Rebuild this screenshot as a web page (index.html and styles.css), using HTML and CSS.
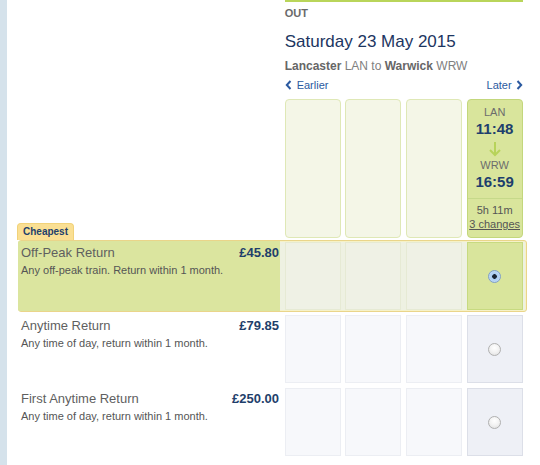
FILE: index.html
```html
<!DOCTYPE html>
<html>
<head>
<meta charset="utf-8">
<link rel="stylesheet" href="styles.css">
</head>
<body>
<div class="page">
  <aside class="strip"></aside>
  <main class="main">
    <header class="head">
      <div class="bar"></div>
      <div class="out">OUT</div>
      <h1 class="date">Saturday 23 May 2015</h1>
      <div class="route"><b>Lancaster</b> LAN to <b>Warwick</b> WRW</div>
      <nav class="nav">
        <a class="earlier"><svg width="7" height="10" viewBox="0 0 7 10"><path d="M5.5 1 L1.8 5 L5.5 9" fill="none" stroke="#2b5aa0" stroke-width="2"/></svg>Earlier</a>
        <a class="later">Later<svg width="7" height="10" viewBox="0 0 7 10"><path d="M1.5 1 L5.2 5 L1.5 9" fill="none" stroke="#2b5aa0" stroke-width="2"/></svg></a>
      </nav>
    </header>

    <div class="grid times">
      <div class="label"></div>
      <div class="tcard"></div>
      <div class="tcard"></div>
      <div class="tcard"></div>
      <div class="tcard sel">
        <div class="tmain">
          <div class="stn">LAN</div>
          <div class="time">11:48</div>
          <svg class="arrow" width="12" height="15" viewBox="0 0 12 15"><path d="M6 0 V13 M1 8 L6 13 L11 8" fill="none" stroke="#b7d35a" stroke-width="2"/></svg>
          <div class="stn">WRW</div>
          <div class="time">16:59</div>
        </div>
        <div class="tfoot">
          <div>5h 11m</div>
          <a class="changes">3 changes</a>
        </div>
      </div>
    </div>

    <div class="grid fare selected">
      <div class="label">
        <span class="tab">Cheapest</span>
        <div class="ftop"><span class="fname">Off-Peak Return</span><span class="price">£45.80</span></div>
        <div class="fdesc">Any off-peak train. Return within 1 month.</div>
      </div>
      <div class="cell"></div>
      <div class="cell"></div>
      <div class="cell"></div>
      <div class="cell last"><span class="radio on"></span></div>
    </div>

    <div class="grid fare">
      <div class="label">
        <div class="ftop"><span class="fname">Anytime Return</span><span class="price">£79.85</span></div>
        <div class="fdesc">Any time of day, return within 1 month.</div>
      </div>
      <div class="cell"></div>
      <div class="cell"></div>
      <div class="cell"></div>
      <div class="cell last"><span class="radio"></span></div>
    </div>

    <div class="grid fare">
      <div class="label">
        <div class="ftop"><span class="fname">First Anytime Return</span><span class="price">£250.00</span></div>
        <div class="fdesc">Any time of day, return within 1 month.</div>
      </div>
      <div class="cell"></div>
      <div class="cell"></div>
      <div class="cell"></div>
      <div class="cell last"><span class="radio"></span></div>
    </div>
  </main>
</div>
</body>
</html>
```

FILE: styles.css
```css
* { box-sizing: border-box; }
html, body { margin: 0; padding: 0; background: #fff; }
body { font-family: "Liberation Sans", Arial, sans-serif; color: #555; }

.page { display: flex; min-height: 465px; }
.strip { width: 7px; flex: none; background: #d5e2eb; }
.main { flex: 1; padding-left: 12px; }

.head { margin-left: 265.67px; width: 238px; }
.bar { height: 2px; background: #b9d55a; }
.out { margin-top: 5px; font-size: 11px; line-height: 13px; font-weight: bold; color: #6a6a6a; }
.date { margin: 11px 0 0; font-size: 17px; line-height: 21px; font-weight: normal; color: #1c3561; }
.route { margin-top: 7px; font-size: 12px; line-height: 15px; color: #808080; }
.route b { color: #666; }
.nav { margin-top: 4px; display: flex; justify-content: space-between; font-size: 11px; line-height: 14px; color: #2b5aa0; }
.nav a { display: flex; align-items: center; gap: 4px; }
.earlier svg { margin-right: 1px; }

.grid {
  display: grid;
  width: fit-content;
  grid-template-columns: 261px repeat(4, 56px);
  column-gap: 4.67px;
  margin: 0 0 0 -1px;
  padding: 1px 3px 1px 0;
  border: 1px solid transparent;
  border-radius: 3px;
}
.times { margin-top: 7px; padding: 0 3px 0 0; border: 0; margin-left: 0; }
.tcard { height: 139px; border: 1px solid #dfe8b6; background: #f4f6e7; border-radius: 4px; }
.tcard.sel { background: #d9e59c; border-color: #c3d77c; display: flex; flex-direction: column; text-align: center; }
.tmain { padding-top: 5px; padding-bottom: 7px; border-bottom: 1px solid #c6d98a; }
.stn { font-size: 11px; line-height: 14px; color: #6c6c6c; }
.time { margin-top: 1px; font-size: 15px; line-height: 18px; font-weight: bold; color: #1d3f6d; }
.arrow { display: block; margin: 4px auto 1px; }
.tfoot { padding-top: 4px; font-size: 11px; line-height: 14px; color: #555; }
.changes { text-decoration: underline; color: #555; }

.fare { position: relative; }
.fare + .fare { margin-top: 1px; }
.selected { margin-top: 2px; border-color: #ead58a; background: #eef1e2; box-shadow: inset 0 0 0 1px #f6f2c8; }
.label { padding: 3px 1px 0 2px; position: relative; }
.selected .label { background: #dbe59f; margin: -1px 0 -1px -1px; padding: 4px 1px 0 3px; border-radius: 2px 0 0 2px; }
.ftop { display: flex; justify-content: space-between; align-items: baseline; }
.fname { font-size: 13px; line-height: 16px; color: #5f5f5f; }
.price { font-size: 13px; line-height: 16px; font-weight: bold; color: #1f3f6b; }
.fdesc { margin-top: 2px; font-size: 11px; line-height: 14px; color: #555; }

.tab {
  position: absolute; left: -1px; top: -18px;
  width: 57px; height: 17px;
  background: #fadf93; border: 1px solid #f1d27a; border-bottom: 0;
  border-radius: 4px 4px 0 0;
  font-size: 10px; line-height: 16px; font-weight: bold; color: #1f3f6b;
  padding-left: 5px;
}

.cell { height: 68px; background: #f7f8fb; border: 1px solid #eceef3; display: flex; align-items: center; justify-content: center; }
.cell.last { background: #eef0f6; border-color: #dcdfe8; }
.selected .cell { background: #eff1e5; border-color: #e6ead4; }
.selected .cell.last { background: #d9e59c; border-color: #c7da80; }

.radio { width: 13px; height: 13px; border-radius: 50%; border: 1px solid #b0b0b0; background: radial-gradient(circle at 50% 35%, #ffffff 0, #f2f2f2 50%, #dcdcdc 100%); }
.radio.on { border-color: #7e9fc9; background: radial-gradient(circle, #1a2533 0, #1a2533 2px, #a9ccf0 2.6px, #cfe4f9 100%); }
```
